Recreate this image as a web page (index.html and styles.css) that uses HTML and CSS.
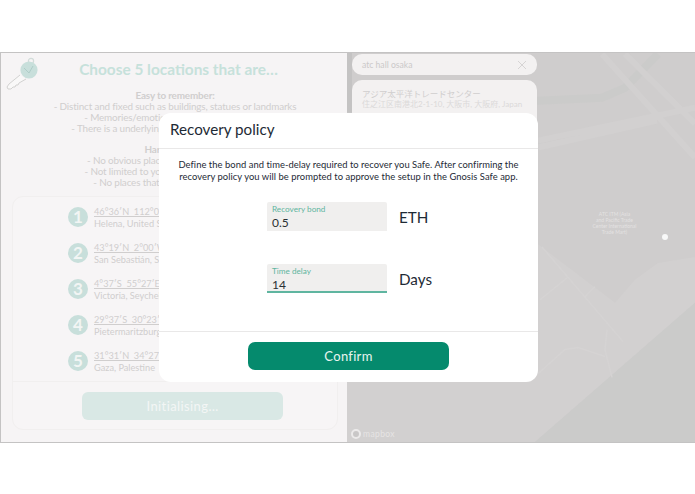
FILE: index.html
```html
<!DOCTYPE html>
<html lang="en">
<head>
<meta charset="utf-8">
<title>Recovery policy</title>
<link rel="stylesheet" href="styles.css">
</head>
<body>
<main class="frame">
  <section class="left">
    <svg class="key" viewBox="0 0 34 34" width="34" height="34" aria-hidden="true">
      <path class="key-blade" d="M15 19 L4 28 L2 31 L3 33 L6 33 L8 31 L10 31 L11 29 L13 29 L14 27 L21 23"/>
      <circle class="key-ring" cx="26" cy="5" r="2.6"/>
      <circle class="key-head" cx="24" cy="14" r="8.6"/>
      <path class="key-line" d="M19 12 L24 17 L28 10"/>
    </svg>
    <h1 class="title">Choose 5 locations that are…</h1>
    <div class="tips">
      <p class="tip-head">Easy to remember:</p>
      <p>- Distinct and fixed such as buildings, statues or landmarks</p>
      <p>- Memories/emotions attached to the place</p>
      <p>- There is a underlying theme linking the locations</p>
      <p class="tip-head tip-gap">Hard to guess:</p>
      <p>- No obvious places such as home or work</p>
      <p>- Not limited to your home town or country</p>
      <p>- No places that are publicly tied to you</p>
    </div>
    <div class="card">
      <ol class="places">
        <li class="place"><span class="num">1</span><div class="place-text"><span class="coord">46°36′N  112°02′W</span><span class="city">Helena, United States</span></div></li>
        <li class="place"><span class="num">2</span><div class="place-text"><span class="coord">43°19′N  2°00′W</span><span class="city">San Sebastián, Spain</span></div></li>
        <li class="place"><span class="num">3</span><div class="place-text"><span class="coord">4°37′S  55°27′E</span><span class="city">Victoria, Seychelles</span></div></li>
        <li class="place"><span class="num">4</span><div class="place-text"><span class="coord">29°37′S  30°23′E</span><span class="city">Pietermaritzburg, South Africa</span></div></li>
        <li class="place"><span class="num">5</span><div class="place-text"><span class="coord">31°31′N  34°27′E</span><span class="city">Gaza, Palestine</span></div></li>
      </ol>
      <div class="card-foot"><button class="init" type="button">Initialising…</button></div>
    </div>
  </section>
  <section class="map">
    <svg class="map-art" viewBox="0 0 348 391" preserveAspectRatio="none" aria-hidden="true">
      <rect class="m-base" width="348" height="391"/>
      <path class="m-light" d="M188 190 L268 251 L288 228 L311 211 L348 205 V251 L188 391 H0 V330 L188 325 Z"/>
      <path class="m-water" d="M348 251 L188 391 H348 Z"/>
      <path class="m-dark" d="M0 48 L191 48 L255 45 L278 35 L311 1"/>
      <path class="m-band" d="M255 1 L348 105 M278 1 L348 71 M191 88 L348 55 M191 95 L310 68"/>
      <path class="m-road" d="M195 195 L276 290 M220 226 L193 248 M248 235 L238 245 M260 278 L258 298 L265 326 M188 325 L218 298 L231 296 L258 305"/>
      <path class="m-gap" d="M0 0 H5 V60 H0 Z"/>
    </svg>
    <div class="search">
      <div class="search-box"><span>atc hall osaka</span>
        <svg class="search-x" viewBox="0 0 10 10" width="10" height="10" aria-hidden="true"><path d="M1 1 L9 9 M9 1 L1 9"/></svg>
      </div>
      <div class="result">
        <div class="result-name">アジア太平洋トレードセンター</div>
        <div class="result-addr">住之江区南港北2-1-10, 大阪市, 大阪府, Japan</div>
      </div>
    </div>
    <div class="map-label">ATC ITM (Asia<br>and Pacific Trade<br>Center International<br>Trade Mart)</div>
    <span class="map-dot"></span>
    <div class="mapbox"><span class="mapbox-mark"></span>mapbox</div>
  </section>
</main>
<div class="modal" role="dialog" aria-labelledby="modal-title">
  <header class="modal-head"><h2 id="modal-title">Recovery policy</h2></header>
  <div class="modal-body">
    <p class="desc">Define the bond and time-delay required to recover you Safe. After confirming the<br>recovery policy you will be prompted to approve the setup in the Gnosis Safe app.</p>
    <div class="fields">
      <div class="field-row">
        <label class="field"><span class="field-label">Recovery bond</span><span class="field-value">0.5</span></label>
        <span class="unit">ETH</span>
      </div>
      <div class="field-row">
        <label class="field field-active"><span class="field-label">Time delay</span><span class="field-value">14</span></label>
        <span class="unit">Days</span>
      </div>
    </div>
  </div>
  <footer class="modal-foot"><button class="confirm" type="button">Confirm</button></footer>
</div>
</body>
</html>
```

FILE: styles.css
```css
* { box-sizing: border-box; }
html, body { margin: 0; height: 494px; overflow: hidden; background: #fff; }
body { font-family: Lato, "Noto Sans CJK JP", sans-serif; position: relative; }
p, h1, h2, ol { margin: 0; padding: 0; }

.frame {
  margin-top: 52px;
  height: 391px;
  display: flex;
  border-top: 1px solid #c4c3c3;
  border-bottom: 1px solid #c4c3c3;
  border-left: 1px solid #c4c3c3;
}

.left {
  position: relative;
  width: 346px;
  flex: none;
  background: #f6f4f5;
  display: flex;
  flex-direction: column;
  padding: 6px 9px 12px 11px;
}
.key { position: absolute; left: 4px; top: 3px; }
.key-blade { fill: #f9f8f8; stroke: #d2d2d1; stroke-width: 1; }
.key-ring { fill: none; stroke: #d2dcd9; stroke-width: 1.2; }
.key-head { fill: #c8dfdb; }
.key-line { fill: none; stroke: #afcdc8; stroke-width: 1; }

.title {
  font-size: 15.4px;
  line-height: 20px;
  font-weight: 700;
  color: #c6e1db;
  text-align: center;
  padding-left: 7px;
}
.tips {
  margin-top: 11px;
  font-size: 9.9px;
  letter-spacing: -.15px;
  line-height: 11px;
  color: #d0cece;
  text-align: center;
}
.tip-head { font-weight: 700; }
.tip-gap { margin-top: 10px; }

.card {
  margin-top: 8px;
  flex: 1;
  background: #f7f5f6;
  border: 1px solid #f1efef;
  border-radius: 11px;
  display: flex;
  flex-direction: column;
}
.places {
  list-style: none;
  flex: 1;
  display: flex;
  flex-direction: column;
  gap: 16px;
  padding: 10px 0 0 55px;
}
.place { display: flex; align-items: center; gap: 6px; height: 20px; }
.num {
  width: 20px;
  height: 20px;
  flex: none;
  border-radius: 50%;
  background: #c8dfdb;
  color: #f2f5f4;
  font-size: 17px;
  font-weight: 700;
  line-height: 20px;
  text-align: center;
}
.place-text { display: flex; flex-direction: column; padding-top: 1px; font-size: 9.2px; line-height: 11.5px; color: #d0cece; white-space: pre; }
.coord { text-decoration: underline; }

.card-foot {
  border-top: 1px solid #f1efef;
  padding: 10px 0 9px 69px;
}
.init {
  display: block;
  width: 201px;
  height: 28px;
  border: 0;
  padding: 0;
  border-radius: 6px;
  background: #d9e8e5;
  color: #f3f6f5;
  font: 400 13px Lato, sans-serif;
  letter-spacing: .4px;
}

.map { position: relative; flex: 1; overflow: hidden; background: #cfcdcd; }
.map-art { position: absolute; inset: 0; width: 100%; height: 100%; display: block; }
.m-base { fill: #cfcdcd; }
.m-light { fill: #d2d0d0; }
.m-water { fill: #cbcbca; }
.m-dark { fill: none; stroke: #cbcbca; stroke-width: 8; }
.m-band { fill: none; stroke: #d2d0d0; stroke-width: 6; }
.m-road { fill: none; stroke: #d5d3d3; stroke-width: 1.5; }
.m-gap { fill: #c4c3c3; }

.search {
  position: absolute;
  left: 5px;
  top: 1px;
  width: 185px;
  display: flex;
  flex-direction: column;
  gap: 5px;
}
.search-box {
  height: 21px;
  border-radius: 10px;
  background: #f3f1f1;
  padding: 0 10px;
  display: flex;
  align-items: center;
  justify-content: space-between;
  font-size: 8.6px;
  color: #cbc9c9;
}
.search-x { fill: none; stroke: #d6d4d4; stroke-width: 1; }
.result {
  height: 60px;
  border-radius: 10px;
  background: #f3f1f1;
  padding: 9px 10px;
}
.result-name { font-size: 8.5px; line-height: 10px; color: #d0cece; }
.result-addr { font-size: 8px; line-height: 10px; color: #dbd9d9; }

.map-label {
  position: absolute;
  left: 240px;
  top: 158px;
  width: 55px;
  text-align: center;
  font-size: 5px;
  line-height: 6px;
  color: #e4e2e2;
}
.map-dot {
  position: absolute;
  left: 315px;
  top: 181px;
  width: 6px;
  height: 6px;
  border-radius: 50%;
  background: #f8f8f8;
}
.mapbox {
  position: absolute;
  left: 4px;
  bottom: 3px;
  display: flex;
  align-items: center;
  gap: 2px;
  font-size: 8.5px;
  font-weight: 400;
  color: #e6e4e4;
  letter-spacing: .4px;
}
.mapbox-mark { width: 10px; height: 10px; border-radius: 50%; border: 2.5px solid #eceaea; background: #c9c7c7; }

.modal {
  position: absolute;
  left: 159px;
  top: 113px;
  width: 379px;
  height: 269px;
  background: #fff;
  border-radius: 12px;
  display: flex;
  flex-direction: column;
}
.modal-head {
  height: 36px;
  border-bottom: 1px solid #e9e8e8;
  padding: 6px 11px 0;
}
.modal-head h2 {
  font-size: 15.2px;
  line-height: 21px;
  font-weight: 400;
  color: #1e2a35;
}
.modal-body { flex: 1; padding: 10px 0 0; }
.desc {
  margin: 0;
  font-size: 9.4px;
  letter-spacing: .05px;
  line-height: 11.5px;
  color: #1e2a35;
  text-align: center;
  white-space: nowrap;
}
.fields {
  margin-top: 20px;
  padding-left: 108px;
  display: flex;
  flex-direction: column;
  gap: 33px;
}
.field-row { display: flex; align-items: center; gap: 12px; }
.field {
  width: 120px;
  height: 29px;
  background: #f0efee;
  border-radius: 2px 2px 0 0;
  padding: 3px 5px 0;
  display: flex;
  flex-direction: column;
}
.field-active { border-bottom: 2px solid #5fb5a0; }
.field-label { font-size: 8.2px; line-height: 9px; color: #5fb5a0; }
.field-value { font-size: 12px; line-height: 15px; margin-top: 1px; color: #2a2f33; }
.unit { font-size: 15.2px; line-height: 20px; color: #1e2a35; }

.modal-foot {
  height: 51px;
  border-top: 1px solid #e9e8e8;
  padding: 10px 0 0 89px;
  display: flex;
}
.confirm {
  width: 201px;
  height: 28px;
  border: 0;
  border-radius: 7px;
  background: #058a6d;
  color: #e9f5f1;
  font: 400 13px Lato, sans-serif;
  letter-spacing: .3px;
  padding: 0;
}
```
